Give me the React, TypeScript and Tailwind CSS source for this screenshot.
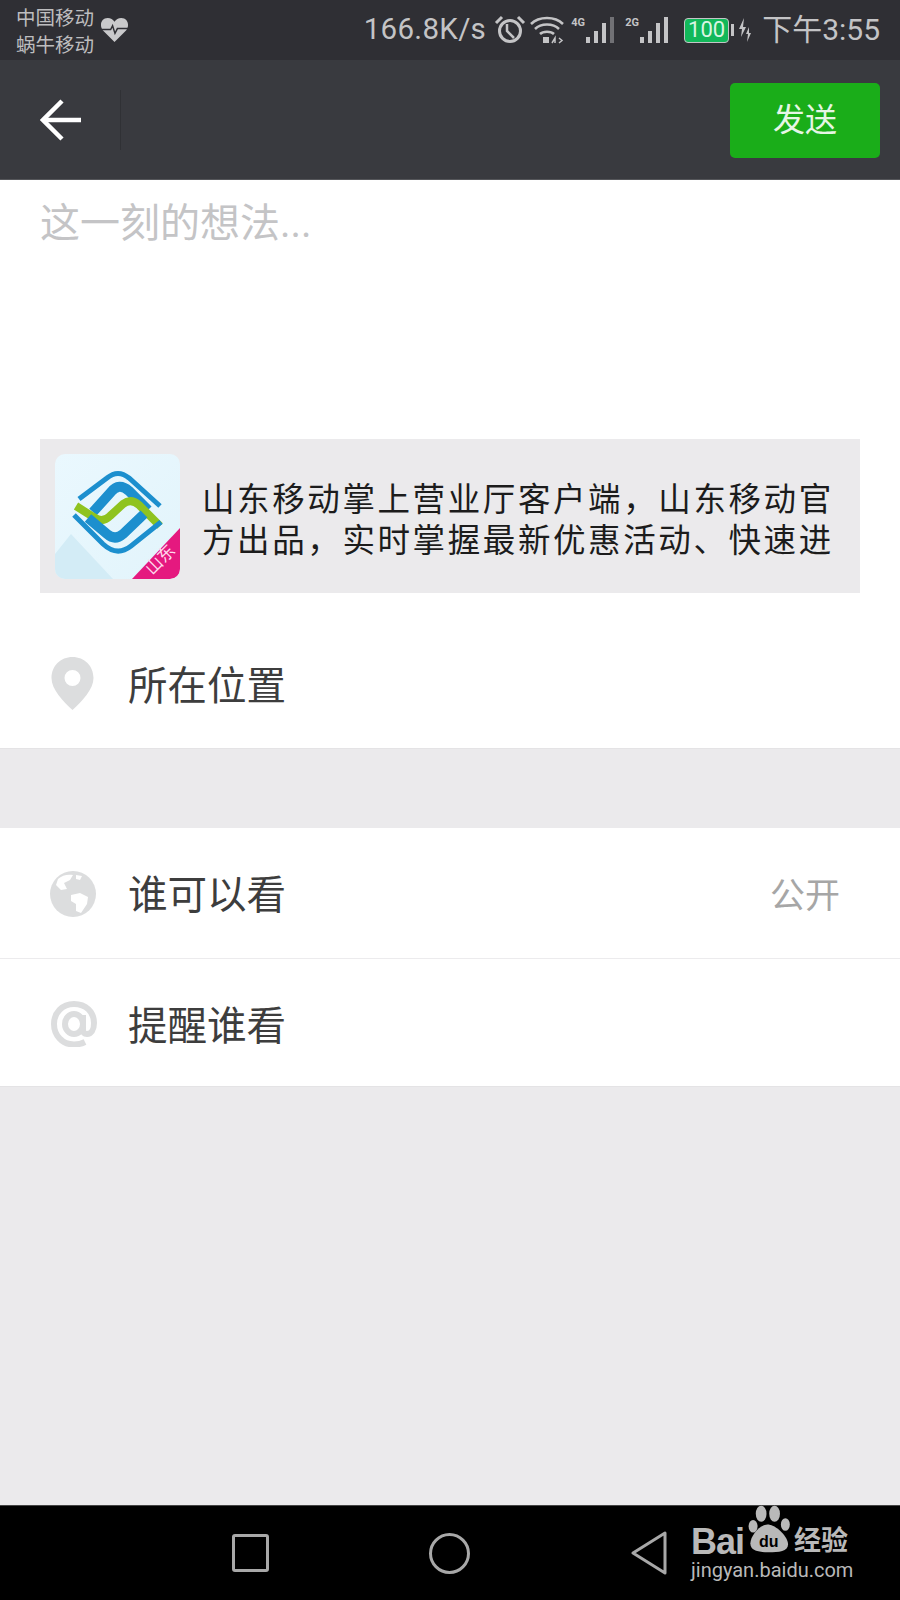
import React from 'react';

const cjk = "font-['Roboto','Noto_Sans_CJK_SC',sans-serif]";

const HeartIcon = () => (
  <svg width="29" height="26" viewBox="0 0 30 27">
    <path d="M15 26 L3 14 C-1 9 1 1 8 1 C11 1 13.500 2.500 15 5 C16.500 2.500 19 1 22 1 C29 1 31 9 27 14 Z" fill="#c9c9cb" />
    <path d="M1 13 H11 L13 9 L15.500 17 L18 12 H29" fill="none" stroke="#2f2f34" strokeWidth="1.500" />
  </svg>
);

const AlarmIcon = () => (
  <svg width="32" height="30" viewBox="0 0 32 30" fill="none" stroke="#c4c4c6">
    <circle cx="16" cy="16" r="10.500" strokeWidth="3" />
    <path d="M13 9 V16 L20 23" strokeWidth="2.500" />
    <path d="M2 8 L8 2 M30 8 L24 2" strokeWidth="3" />
  </svg>
);

const WifiIcon = () => (
  <svg width="34" height="28" viewBox="0 0 34 28" fill="none" stroke="#c4c4c6" strokeWidth="2.500">
    <path d="M1 8 C9 0 25 0 33 8" />
    <path d="M5 13 C11 7 23 7 29 13" />
    <path d="M10 18 C13 15 21 15 24 18" />
    <rect x="13" y="21" width="6" height="6" fill="#c4c4c6" stroke="none" />
    <path d="M22 27 L25 22 L25 27 M29 22 L32 24.500 L29 27" strokeWidth="1.500" />
  </svg>
);

const SignalIcon = ({ dim }: { dim?: boolean }) => (
  <svg width="29" height="26" viewBox="0 0 29 26" fill="#c4c4c6">
    <rect x="0" y="20" width="4" height="6" />
    <rect x="8" y="14" width="4" height="12" />
    <rect x="16" y="6" width="4" height="20" />
    <rect x="24" y="0" width="4" height="26" opacity={dim ? 0.45 : 1} />
  </svg>
);

const LogoIcon = () => (
  <div className="w-[125px] h-[125px] rounded-[10px] overflow-hidden shrink-0 bg-gradient-to-br from-[#eaf8fe] to-[#e2f4fb] relative">
    <svg width="125" height="125" viewBox="0 0 125 125" fill="none">
      <path d="M0 100 L16 80 L58 125 L0 125 Z" fill="#d3ecf6" />
      <path d="M24 45 L52 24 Q63 15 74 24 L105 52" stroke="#1c8fce" strokeWidth="5" />
      <path d="M38 58 L56 38 Q64 28 74 37 L93 56" stroke="#1c8fce" strokeWidth="10" />
      <path d="M21 52 L40 64 Q48 69 55 62 L68 50 Q76 44 84 51 L105 72" stroke="#8fc31f" strokeWidth="8" />
      <path d="M19 61 L48 90 Q62 103 76 92 L106 68" stroke="#1c8fce" strokeWidth="5" />
      <path d="M33 64 L52 80 Q60 87 68 80 L89 60" stroke="#1c8fce" strokeWidth="10" />
      <path d="M125 74 V115 C125 121 121 125 115 125 H77 Z" fill="#e5197f" />
    </svg>
    <span className="absolute right-[4px] bottom-[12px] text-[#ffd9ec] text-[17px] leading-none -rotate-45 font-['Noto_Sans_CJK_SC',sans-serif]">山东</span>
  </div>
);

const PinIcon = () => (
  <svg width="43" height="53" viewBox="0 0 42 53" className="-mt-[6px]">
    <path fillRule="evenodd" d="M21 0 C33 0 42 9 42 21 C42 32 31 44 21 53 C11 44 0 32 0 21 C0 9 9 0 21 0 Z M21 13 A8 8 0 1 0 21.010 29 A8 8 0 1 0 21 13 Z" fill="#dcddde" />
  </svg>
);

const GlobeIcon = () => (
  <svg width="46" height="46" viewBox="0 0 46 46" className="-mt-[4px] -ml-[1px]">
    <circle cx="23" cy="23" r="23" fill="#dcddde" />
    <path d="M8 8 C12 4 18 3 23 4 L20 9 L14 12 L17 18 L11 19 L6 14 Z" fill="#fff" />
    <path d="M21 24 L30 22 L38 26 L37 33 L31 42 L26 40 L26 33 L21 30 Z" fill="#fff" />
    <path d="M26 4 L32 5 L30 9 L26 8 Z" fill="#fff" />
  </svg>
);

const AtIcon = () => (
  <svg width="46" height="46" viewBox="0 0 46 46" fill="none" stroke="#dcddde" strokeWidth="6" className="-mt-[6px]">
    <path d="M34 41 C30 43 27 43.500 23 43.500 C11 43.500 3 34 3 23 C3 12 11 3 23 3 C35 3 43 11 43 22 C43 29 40 33 36 33 C33 33 32 31 32 28 V14" />
    <ellipse cx="23" cy="23" rx="9" ry="10" />
  </svg>
);

const Row = ({ icon, label, right, className }: { icon: React.ReactNode; label: string; right?: string; className: string }) => (
  <div className={`flex items-center bg-white ${className}`}>
    <div className="w-[128px] shrink-0 flex pl-[51px]">{icon}</div>
    <span className="text-[39.500px] leading-none text-[#3d3d3d]">{label}</span>
    {right && <span className="ml-auto mr-[60px] text-[35px] leading-none text-[#a6a6a6]">{right}</span>}
  </div>
);

export default function App() {
  return (
    <div className={`w-[900px] h-[1600px] flex flex-col bg-[#ebeaec] relative overflow-hidden ${cjk}`}>
      {/* status bar */}
      <div className="h-[60px] shrink-0 bg-[#2f2f34] flex items-center text-[#c4c4c6]">
        <div className="ml-[16px] mt-[3px] flex flex-col text-[19.500px] leading-[27px] text-[#bdbdbf]">
          <span>中国移动</span>
          <span>蜗牛移动</span>
        </div>
        <div className="ml-[6px]"><HeartIcon /></div>
        <div className="ml-auto mr-[20px] flex items-center">
          <span className="text-[29.500px] leading-none tracking-[0.3px]">166.8K/s</span>
          <div className="ml-[8px]"><AlarmIcon /></div>
          <div className="ml-[4px]"><WifiIcon /></div>
          <div className="relative ml-[7px] w-[44px] h-[26px]">
            <span className="absolute left-0 top-0 text-[11px] font-bold leading-none">4G</span>
            <div className="absolute left-[15px] top-0"><SignalIcon dim /></div>
          </div>
          <div className="relative ml-[10px] w-[45px] h-[26px]">
            <span className="absolute left-0 top-0 text-[11px] font-bold leading-none">2G</span>
            <div className="absolute left-[15px] top-0"><SignalIcon /></div>
          </div>
          <div className="ml-[14px] w-[45px] h-[25px] rounded-[4px] border border-[#c4c4c6] bg-[#12b85a] flex items-center justify-center text-[22px] leading-none text-[#d9f5e2]">100</div>
          <div className="w-[3px] h-[12px] bg-[#c4c4c6] ml-[2px] mr-[4px]" />
          <svg width="14" height="24" viewBox="0 0 14 24" fill="#c4c4c6"><path d="M6 0 L1 11 H4 L3 19 L8 9 H5 Z M11 9 L8 16 H10 L9 24 L13 15 H11 Z" /></svg>
          <span className="ml-[10px] text-[30px] leading-none">下午3:55</span>
        </div>
      </div>

      {/* header */}
      <div className="h-[120px] shrink-0 bg-[#393a3f] flex items-center border-b border-[#55565a]">
        <div className="w-[121px] h-[60px] border-r border-[#303135] flex items-center pl-[40px]">
          <svg width="42" height="42" viewBox="0 0 42 42" fill="none" stroke="#ffffff" strokeWidth="4.500">
            <path d="M41 21 H4" />
            <path d="M22 2 L3 21 L22 40" />
          </svg>
        </div>
        <button className="ml-auto mr-[20px] mt-[1px] w-[150px] h-[75px] rounded-[5px] bg-[#1aad19] text-[#e6f6e6] text-[32px] leading-none">发送</button>
      </div>

      {/* composer */}
      <div className="bg-white flex flex-col h-[568px] shrink-0">
        <div className="h-[259px] pl-[40px] pt-[21px] text-[40px] leading-[46px] text-[#c4c4c6]">这一刻的想法...</div>
        <div className="mx-[40px] h-[154px] bg-[#ebeaec] flex items-center pl-[15px]">
          <LogoIcon />
          <div className="ml-[22px] mt-[10px] w-[640px] text-[32.500px] leading-[41px] text-[#1c1c1c] tracking-[2.600px] whitespace-nowrap">
            <div>山东移动掌上营业厅客户端，山东移动官</div>
            <div>方出品，实时掌握最新优惠活动、快速进</div>
          </div>
        </div>
        <Row icon={<PinIcon />} label="所在位置" className="h-[155px] pt-[32px]" />
      </div>

      <div className="h-[80px] shrink-0 border-t border-[#e4e3e5]" />

      <Row icon={<GlobeIcon />} label="谁可以看" right="公开" className="h-[130px] shrink-0 pt-[6px]" />
      <div className="h-px shrink-0 bg-[#ecebed]" />
      <Row icon={<AtIcon />} label="提醒谁看" className="h-[128px] shrink-0 pt-[8px] border-b border-[#e4e3e5]" />

      <div className="flex-1" />

      {/* nav bar */}
      <div className="h-[95px] shrink-0 bg-black border-t border-[#444] flex items-center relative">
        <div className="ml-[232px] w-[37px] h-[38px] rounded-[3px] border-[3px] border-[#a8a8a8]" />
        <div className="ml-[160px] w-[41px] h-[41px] rounded-full border-[3px] border-[#a8a8a8]" />
        <svg className="ml-[161px]" width="37" height="44" viewBox="0 0 37 44" fill="none" stroke="#a8a8a8" strokeWidth="3" strokeLinejoin="round">
          <path d="M34 2 V42 L2 22 Z" />
        </svg>

        {/* watermark */}
        <div className="absolute left-[691px] top-0 w-[165px] h-[90px] text-[#b9b9b9]">
          <span className="absolute left-0 top-[18px] text-[36px] leading-none font-black font-['Liberation_Sans',sans-serif] tracking-[-1px]">Bai</span>
          <svg className="absolute left-[56px] top-[-3px]" width="48" height="52" viewBox="0 0 50 58" fill="#b9b9b9">
            <ellipse cx="14" cy="12" rx="6" ry="9" />
            <ellipse cx="29" cy="12" rx="6" ry="9" />
            <ellipse cx="41" cy="24" rx="5" ry="7" />
            <ellipse cx="5" cy="26" rx="5" ry="7" />
            <path d="M21 24 C31 24 44 38 44 46 C44 54 34 55 22 55 C10 55 2 53 2 45 C2 37 12 24 21 24 Z" />
          </svg>
          <span className="absolute left-[68px] top-[28px] text-[16px] leading-none font-bold text-black font-['Liberation_Sans',sans-serif]">du</span>
          <span className="absolute left-[103px] top-[19px] text-[27px] leading-none font-bold whitespace-nowrap font-['Noto_Sans_CJK_SC',sans-serif]">经验</span>
          <span className="absolute left-0 top-[54px] text-[20px] leading-none font-['Roboto',sans-serif] whitespace-nowrap">jingyan.baidu.com</span>
        </div>
      </div>
    </div>
  );
}
